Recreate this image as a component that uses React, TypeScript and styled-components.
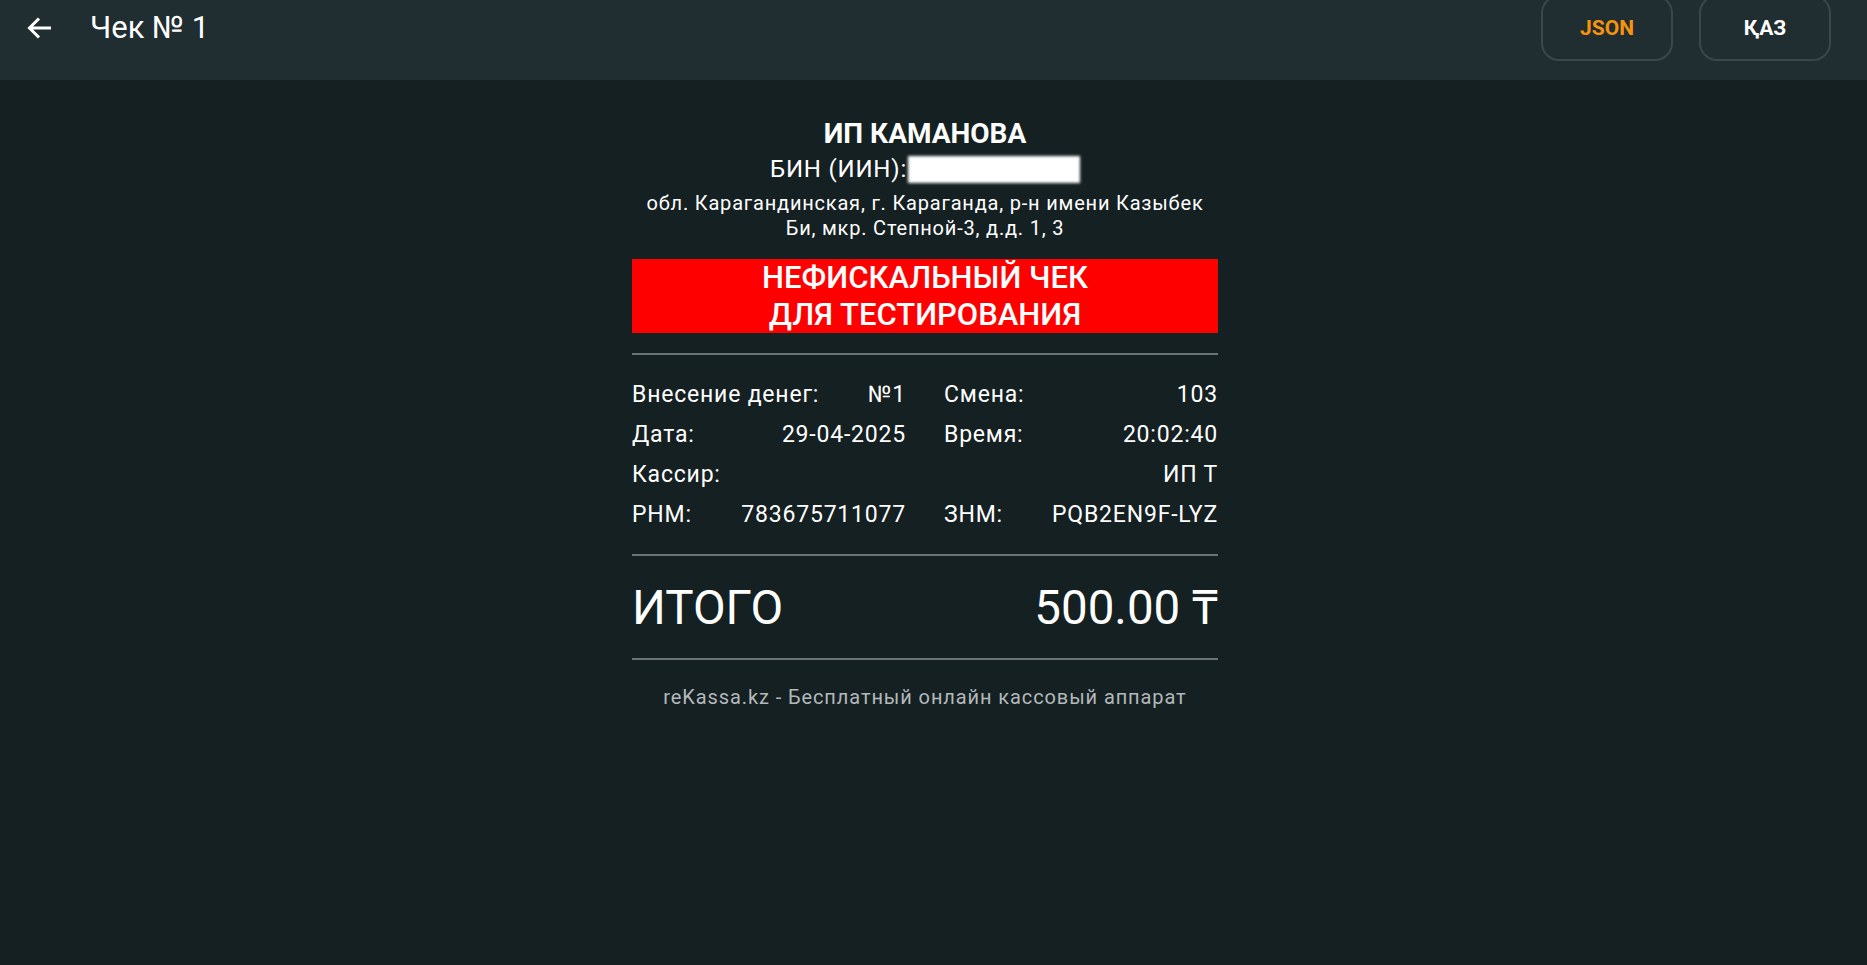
import React from "react";
import styled, { createGlobalStyle } from "styled-components";

const GlobalStyle = createGlobalStyle`
  html, body {
    margin: 0;
    padding: 0;
    background: #152022;
    font-family: Roboto, "Noto Sans", "Liberation Sans", sans-serif;
    color: #ffffff;
  }
  * { box-sizing: border-box; }
`;

const Page = styled.div`
  min-height: 965px;
  background: #152022;
  display: flex;
  flex-direction: column;
`;

const Header = styled.header`
  height: 80px;
  background: #202d31;
  display: flex;
  align-items: center;
  padding: 0 36px 24px 27px;
  overflow: hidden;
`;

const BackButton = styled.button`
  width: 26px;
  height: 26px;
  padding: 0;
  border: none;
  background: transparent;
  display: flex;
  align-items: center;
  justify-content: center;
  cursor: pointer;
`;

const Title = styled.h1`
  margin: 0 0 0 37px;
  font-size: 31px;
  font-weight: 400;
  line-height: 40px;
  color: #ffffff;
  flex: 1;
`;

const Actions = styled.div`
  display: flex;
  gap: 26px;
`;

const HeaderButton = styled.button<{ $accent?: boolean }>`
  width: 132px;
  height: 66px;
  border-radius: 18px;
  border: 2px solid #3a474b;
  background: transparent;
  color: ${(p) => (p.$accent ? "#f7940d" : "#ffffff")};
  font-family: Roboto, "Noto Sans", sans-serif;
  font-size: 21px;
  font-weight: 700;
  display: flex;
  align-items: center;
  justify-content: center;
  cursor: pointer;
`;

const Main = styled.main`
  display: flex;
  justify-content: center;
  padding: 37px 17px 0 0;
`;

const Receipt = styled.div`
  width: 586px;
  display: flex;
  flex-direction: column;
`;

const CompanyName = styled.div`
  text-align: center;
  font-size: 28px;
  font-weight: 700;
  line-height: 34px;
`;

const BinLine = styled.div`
  text-align: center;
  font-size: 24px;
  letter-spacing: 0.8px;
  line-height: 36px;
  display: flex;
  justify-content: center;
  align-items: center;
`;

const Redacted = styled.span`
  display: inline-block;
  width: 172px;
  height: 27px;
  background: #ffffff;
  filter: blur(1.5px);
  margin-left: 1px;
`;

const Address = styled.div`
  margin-top: 4px;
  text-align: center;
  font-size: 20px;
  letter-spacing: 0.8px;
  line-height: 25px;
`;

const Banner = styled.div`
  margin-top: 18px;
  background: #ff0000;
  text-align: center;
  font-size: 31px;
  font-weight: 500;
  line-height: 37px;
  color: #ffffff;
`;

const Divider = styled.hr<{ $top: number }>`
  margin: ${(p) => p.$top}px 0 0 0;
  border: none;
  border-top: 2px solid #6b7375;
  height: 0;
`;

const InfoGrid = styled.div`
  margin-top: 20px;
  display: grid;
  grid-template-columns: 1fr 1fr;
  column-gap: 38px;
`;

const InfoCell = styled.div<{ $span?: boolean }>`
  display: flex;
  justify-content: space-between;
  font-size: 23px;
  letter-spacing: 0.8px;
  line-height: 40px;
  grid-column: ${(p) => (p.$span ? "1 / span 2" : "auto")};
`;

const TotalRow = styled.div`
  display: flex;
  justify-content: space-between;
  font-size: 47.5px;
  line-height: 54px;
  margin-top: 25px;
`;

const Footer = styled.div`
  margin-top: 22px;
  text-align: center;
  font-size: 20px;
  letter-spacing: 0.9px;
  line-height: 30px;
  color: #b3b8ba;
`;

const ArrowIcon = () => (
  <svg width="26" height="24" viewBox="0 0 26 24" fill="none">
    <path
      d="M24 12H3M12 2.5L2.5 12L12 21.5"
      stroke="#ffffff"
      strokeWidth="3"
      strokeLinecap="butt"
      strokeLinejoin="miter"
    />
  </svg>
);

const info: { label: string; value: string; span?: boolean }[] = [
  { label: "Внесение денег:", value: "№1" },
  { label: "Смена:", value: "103" },
  { label: "Дата:", value: "29-04-2025" },
  { label: "Время:", value: "20:02:40" },
  { label: "Кассир:", value: "ИП Т", span: true },
  { label: "РНМ:", value: "783675711077" },
  { label: "ЗНМ:", value: "PQB2EN9F-LYZ" },
];

export default function App() {
  return (
    <Page>
      <GlobalStyle />
      <Header>
        <BackButton aria-label="Назад">
          <ArrowIcon />
        </BackButton>
        <Title>Чек № 1</Title>
        <Actions>
          <HeaderButton $accent>JSON</HeaderButton>
          <HeaderButton>ҚАЗ</HeaderButton>
        </Actions>
      </Header>
      <Main>
        <Receipt>
          <CompanyName>ИП КАМАНОВА</CompanyName>
          <BinLine>
            БИН (ИИН):<Redacted />
          </BinLine>
          <Address>
            обл. Карагандинская, г. Караганда, р-н имени Казыбек
            <br />
            Би, мкр. Степной-3, д.д. 1, 3
          </Address>
          <Banner>
            НЕФИСКАЛЬНЫЙ ЧЕК
            <br />
            ДЛЯ ТЕСТИРОВАНИЯ
          </Banner>
          <Divider $top={20} />
          <InfoGrid>
            {info.map((row) => (
              <InfoCell key={row.label} $span={row.span}>
                <span>{row.label}</span>
                <span>{row.value}</span>
              </InfoCell>
            ))}
          </InfoGrid>
          <Divider $top={19} />
          <TotalRow>
            <span>ИТОГО</span>
            <span>500.00 ₸</span>
          </TotalRow>
          <Divider $top={23} />
          <Footer>reKassa.kz - Бесплатный онлайн кассовый аппарат</Footer>
        </Receipt>
      </Main>
    </Page>
  );
}
